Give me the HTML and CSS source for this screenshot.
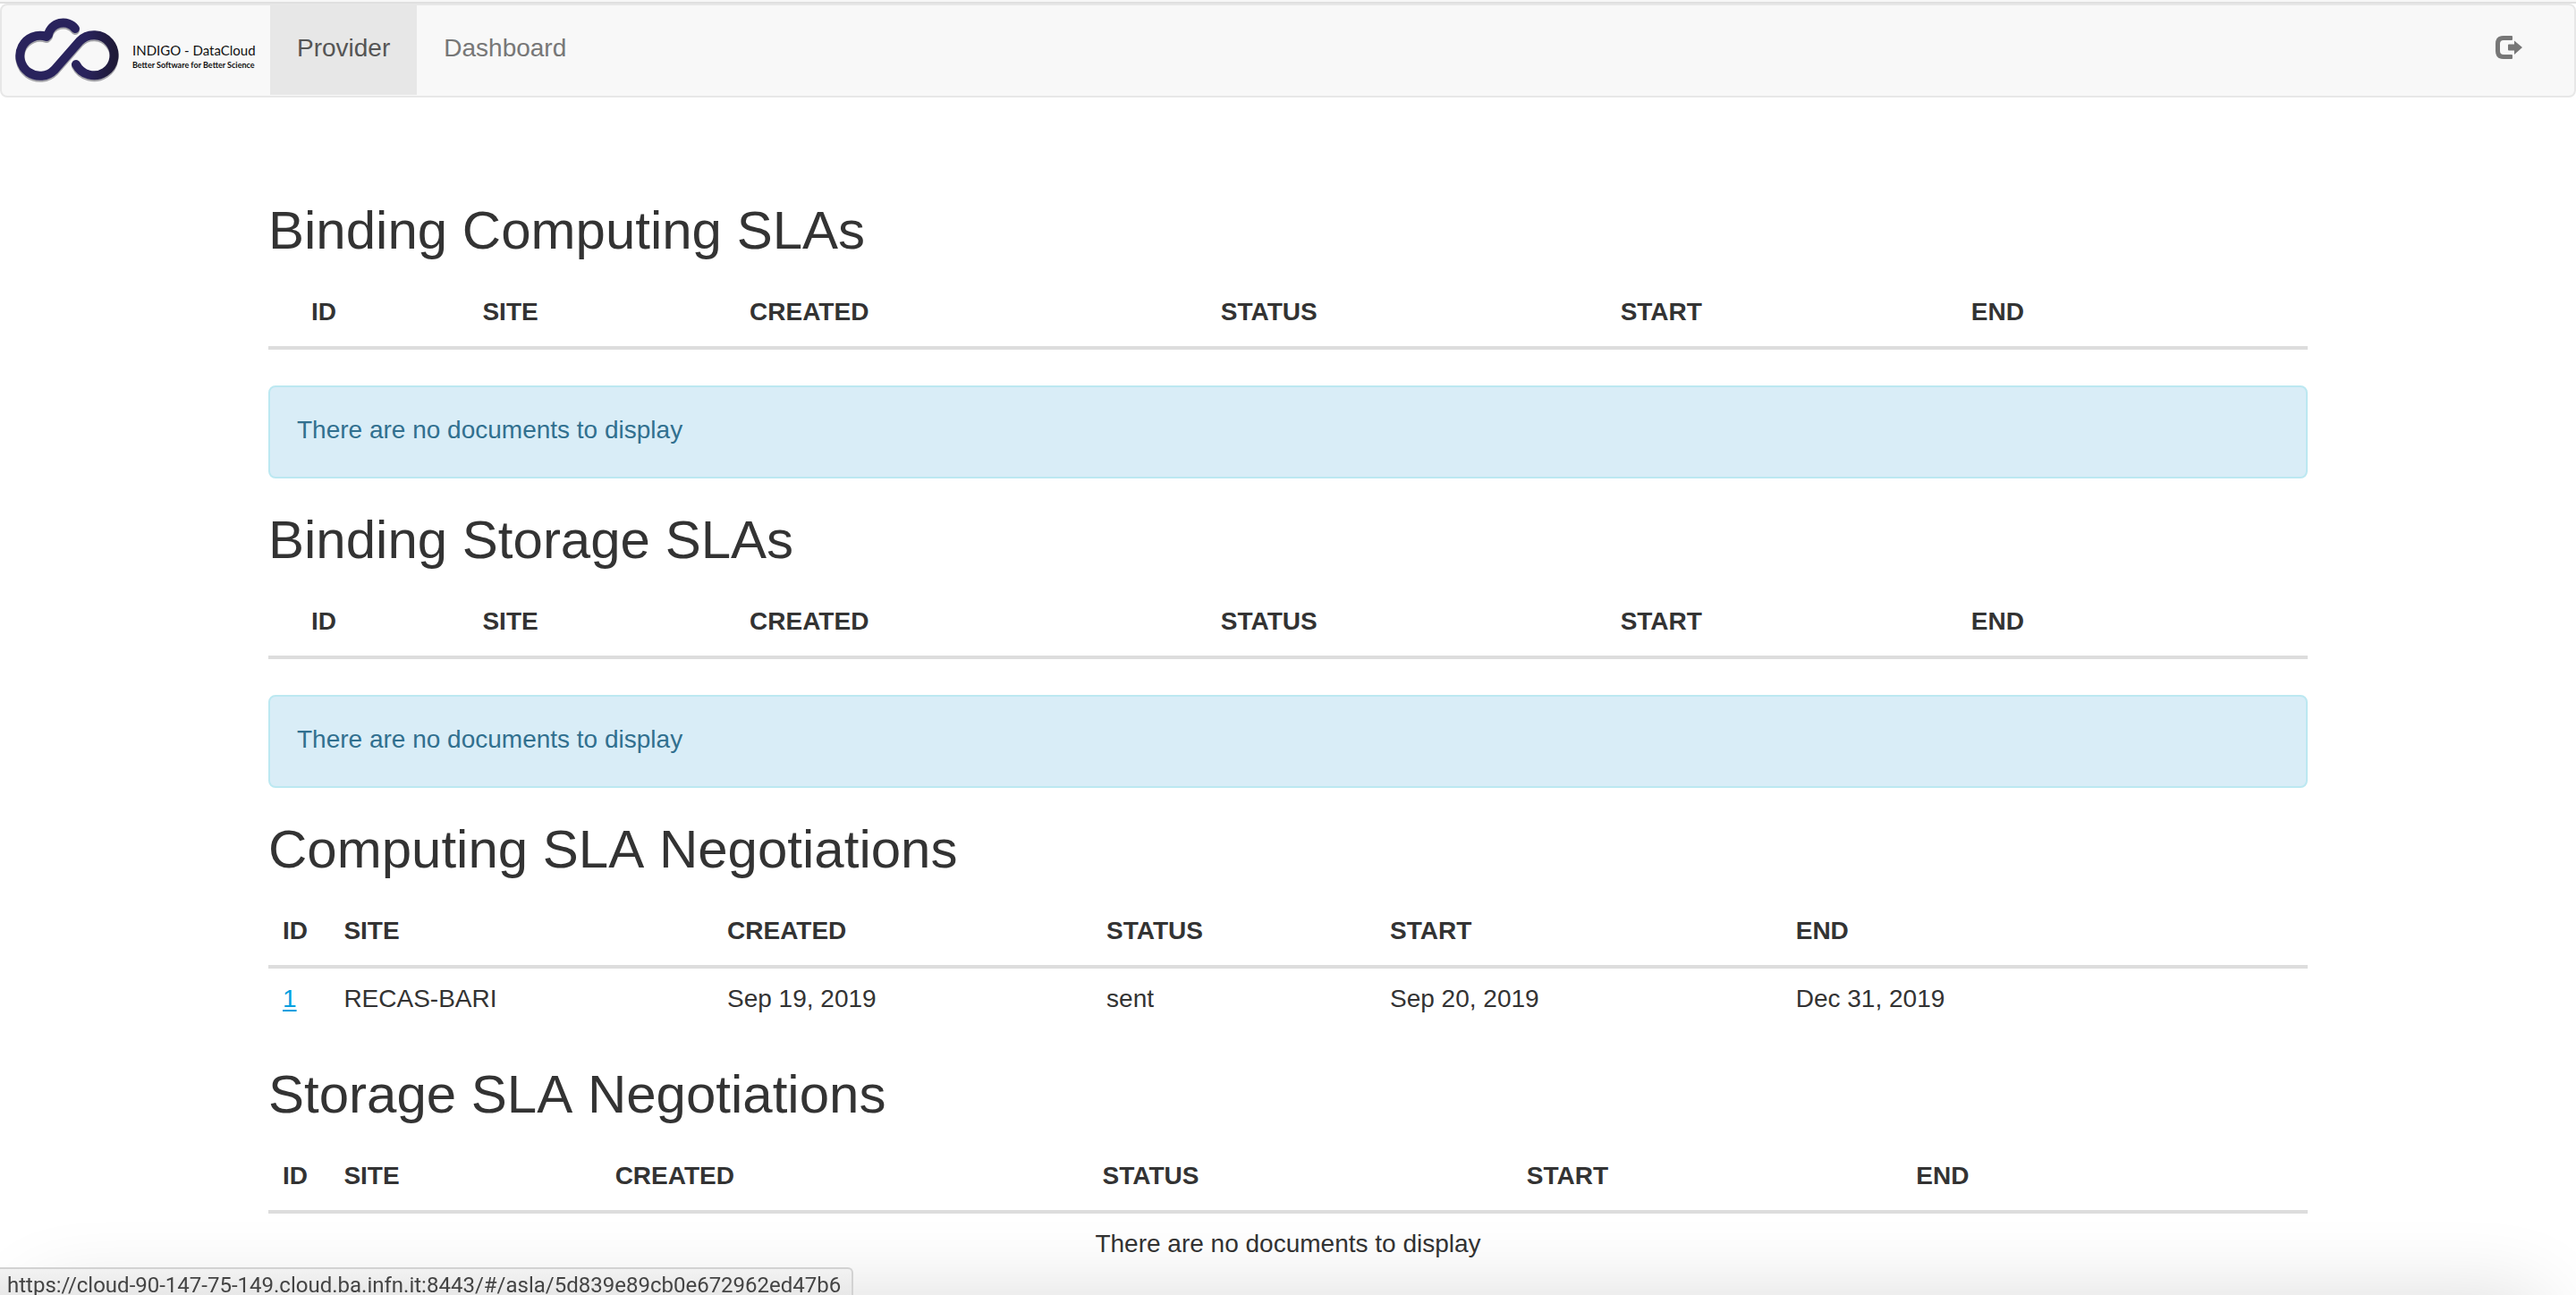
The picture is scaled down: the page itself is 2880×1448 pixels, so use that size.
FILE: index.html
```html
<!DOCTYPE html>
<html lang="en">
<head>
<meta charset="utf-8">
<title>Provider</title>
<link rel="stylesheet" href="styles.css">
</head>
<body>
<nav class="navbar">
  <a class="brand" href="#" aria-label="INDIGO - DataCloud">
    <svg class="brand-mark" viewBox="0 0 118 76" aria-hidden="true">
      <defs>
        <linearGradient id="ink" x1="0" x2="1" y1="0" y2="0">
          <stop offset="0.7" stop-color="#29235c"/>
          <stop offset="1" stop-color="#1f1a38"/>
        </linearGradient>
      </defs>
      <g fill="none" stroke-width="10" stroke-linecap="round" stroke-linejoin="round">
        <path stroke="#a3a3a8" transform="translate(0 2)" d="M68 15A17 17 0 0 0 38 22L36 24A22.500 22.500 0 1 0 45 61L73 29A22.500 22.500 0 1 1 69 55"/>
        <path stroke="url(#ink)" d="M68 15A17 17 0 0 0 38 22L36 24A22.500 22.500 0 1 0 45 61L73 29A22.500 22.500 0 1 1 69 55"/>
      </g>
    </svg>
    <span class="brand-text">
      <span class="brand-name">INDIGO - DataCloud</span>
      <span class="brand-motto">Better Software for Better Science</span>
    </span>
  </a>
  <a class="nav-link active" href="#">Provider</a>
  <a class="nav-link" href="#">Dashboard</a>
  <a class="logout" href="#" aria-label="Log out">
    <svg viewBox="0 0 30 26" aria-hidden="true" fill="#777">
      <path d="M18 0H9Q0 0 0 9V17Q0 26 9 26H18Q19 26 19 25V22Q19 21 18 21H9Q5 21 5 17V9Q5 5 9 5H18Q19 5 19 4V1Q19 0 18 0Z"/>
      <path d="M15 9.500H21V5.500L30 13L21 21V16.500H15Q14 16.500 14 15.500V10.500Q14 9.500 15 9.500Z"/>
    </svg>
  </a>
</nav>

<main class="container">
  <h2>Binding Computing SLAs</h2>
  <table class="table binding">
    <thead><tr><th>ID</th><th>SITE</th><th>CREATED</th><th>STATUS</th><th>START</th><th>END</th></tr></thead>
  </table>
  <div class="alert">There are no documents to display</div>

  <h2>Binding Storage SLAs</h2>
  <table class="table binding">
    <thead><tr><th>ID</th><th>SITE</th><th>CREATED</th><th>STATUS</th><th>START</th><th>END</th></tr></thead>
  </table>
  <div class="alert">There are no documents to display</div>

  <h2>Computing SLA Negotiations</h2>
  <table class="table computing">
    <thead><tr><th>ID</th><th>SITE</th><th>CREATED</th><th>STATUS</th><th>START</th><th>END</th></tr></thead>
    <tbody><tr><td><a href="#">1</a></td><td>RECAS-BARI</td><td>Sep 19, 2019</td><td>sent</td><td>Sep 20, 2019</td><td>Dec 31, 2019</td></tr></tbody>
  </table>

  <h2>Storage SLA Negotiations</h2>
  <table class="table storage">
    <thead><tr><th>ID</th><th>SITE</th><th>CREATED</th><th>STATUS</th><th>START</th><th>END</th></tr></thead>
    <tbody><tr><td class="empty" colspan="6">There are no documents to display</td></tr></tbody>
  </table>
</main>

<div class="edge-shade"></div>
<div class="status-bar">https://cloud-90-147-75-149.cloud.ba.infn.it:8443/#/asla/5d839e89cb0e672962ed47b6</div>
</body>
</html>
```

FILE: styles.css
```css
* { box-sizing: border-box; }
html { scrollbar-width: none; }
body {
  margin: 0;
  border-top: 2px solid #f7f7f7;
  background: #fff;
  color: #333;
  font: 28px/40px "Liberation Sans", Arial, sans-serif;
}
body::before {
  content: "";
  display: block;
  height: 2px;
  background: #e0e0e0;
}

.navbar {
  display: flex;
  align-items: flex-start;
  margin-bottom: 120px;
  padding-bottom: 1px;
  background: #f8f8f8;
  border: 2px solid #e7e7e7;
  border-radius: 8px;
}
.navbar a { text-decoration: none; }
.brand {
  display: flex;
  width: 300px;
  height: 100px;
  padding: 11px 0 0 14px;
  gap: 14px;
  color: #111;
}
.brand-mark { width: 118px; height: 76px; }
.brand-text {
  display: flex;
  flex-direction: column;
  padding-top: 29px;
  font-family: Lato, sans-serif;
  white-space: nowrap;
}
.brand-name { font-size: 15px; line-height: 20px; }
.brand-motto { font-size: 9px; font-weight: 700; line-height: 14px; }
.nav-link {
  height: 100px;
  padding: 28px 30px;
  color: #777;
}
.nav-link.active { background: #e7e7e7; color: #555; }
.logout { margin: 34px 58px 0 auto; }
.logout svg { display: block; width: 30px; height: 26px; }

.container {
  max-width: 2340px;
  margin: 0 auto;
  padding: 0 30px;
}
h2 {
  margin: 40px 0 28px;
  font-size: 60px;
  font-weight: 400;
  font-kerning: none;
  line-height: 58px;
}
h2:first-child { margin-top: 0; }

.table {
  width: 100%;
  margin-bottom: 40px;
  table-layout: fixed;
  border-spacing: 0;
}
th, td { padding: 14px 16px 18px; text-align: left; }
th { border-bottom: 4px solid #ddd; }
td a {
  color: #009fdf;
  text-decoration-thickness: 2px;
  text-underline-offset: 3px;
}
.empty { text-align: center; }

.binding th:first-child { width: 9.8%; padding-left: 48px; }
.binding th:nth-child(2) { width: 13.1%; }
.binding th:nth-child(3) { width: 23.1%; }
.binding th:nth-child(4) { width: 19.6%; }
.binding th:nth-child(5) { width: 17.2%; }

.computing th:nth-child(1) { width: 3%; }
.computing th:nth-child(2) { width: 18.8%; }
.computing th:nth-child(3) { width: 18.6%; }
.computing th:nth-child(4) { width: 13.9%; }
.computing th:nth-child(5) { width: 19.9%; }

.storage th:nth-child(1) { width: 3%; }
.storage th:nth-child(2) { width: 13.3%; }
.storage th:nth-child(3) { width: 23.9%; }
.storage th:nth-child(4) { width: 20.8%; }
.storage th:nth-child(5) { width: 19.1%; }

.alert {
  padding: 28px 30px 32px;
  border: 2px solid #bce8f1;
  border-radius: 8px;
  background: #d9edf7;
  color: #31708f;
}

.edge-shade {
  position: fixed;
  right: 40px;
  bottom: -200px;
  left: 40px;
  height: 200px;
  box-shadow: 0 0 90px rgba(0, 0, 0, 0.14);
}
.status-bar {
  position: fixed;
  bottom: 0;
  left: 0;
  height: 31px;
  padding: 4px 12px 0 8px;
  border: 2px solid #d2d2d2;
  border-width: 2px 2px 0 0;
  border-top-right-radius: 6px;
  background: linear-gradient(#f2f2f2, #e8e8e8);
  color: #444;
  font: 24px/28px Roboto, sans-serif;
  white-space: nowrap;
}
```
